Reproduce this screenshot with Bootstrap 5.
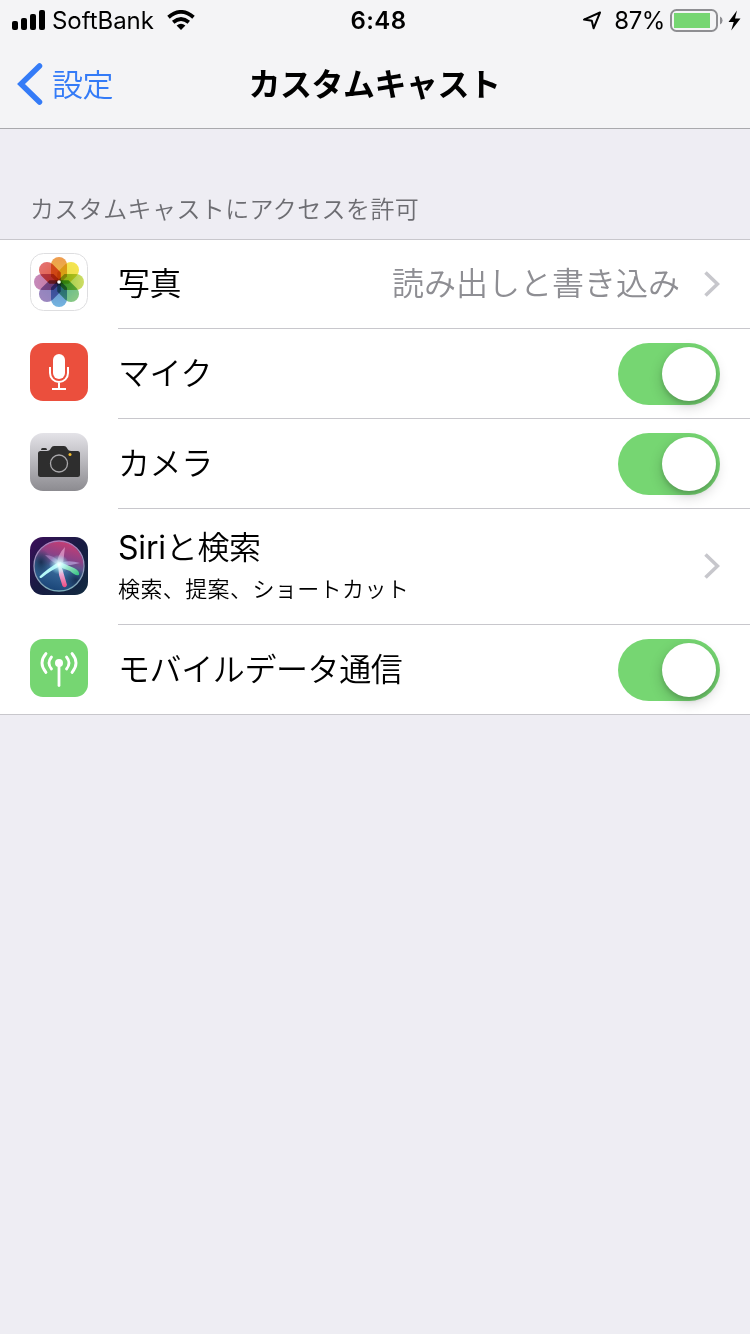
<!DOCTYPE html>
<html lang="ja">
<head>
<meta charset="utf-8">
<meta name="viewport" content="width=device-width, initial-scale=1">
<title>カスタムキャスト</title>
<link href="https://cdn.jsdelivr.net/npm/bootstrap@5.3.0/dist/css/bootstrap.min.css" rel="stylesheet">
<style>
  body { background: #eeedf3; color: #000; font-family: Inter, "Noto Sans CJK JP", sans-serif; font-weight: 350; line-height: 1; }
  svg { display: block; flex: none; }
  .top-area { background: #f4f4f6; height: 129px; border-bottom: 1px solid #a9a9ad; }
  .status-row { height: 40px; font-size: 24px; font-weight: 400; display: grid; grid-template-columns: 1fr auto 1fr; padding: 0 9px 0 12px; }
  .carrier { letter-spacing: -.05px; margin: 0 13px 0 7px; padding-top: 2px; }
  .clock { font-weight: 600; letter-spacing: .4px; padding: 2px 0 0 4px; }
  .percent { letter-spacing: -.4px; padding-top: 2px; margin: 0 4px 0 12px; }
  .title-row { height: 88px; display: grid; grid-template-columns: 1fr auto 1fr; padding: 0 17px; }
  .back-link { color: #347bf7; font-size: 31px; letter-spacing: -.5px; gap: 9px; }
  .page-title { font-size: 32px; font-weight: 700; letter-spacing: -.5px; padding: 2px 1px 0 0; }
  .section-label { height: 110px; padding: 0 30px 14px; font-size: 24px; font-weight: 350; letter-spacing: .4px; color: #6d6d72; }
  .settings { border-top: 1px solid #c8c7cc; border-bottom: 1px solid #c8c7cc; background: #fff; }
  .setting { height: 90px; padding-left: 30px; gap: 30px; }
  .setting:first-child { height: 89px; }
  .setting:last-child { height: 89px; }
  .app-icon { margin-bottom: 4px; }
  .setting:first-child .app-icon { margin-bottom: 5px; }
  .setting-tall .app-icon { margin-bottom: 2px; }
  .setting.setting-tall { height: 116px; }
  .setting-body { height: 100%; border-bottom: 1px solid #c8c7cc; padding-right: 30px; font-size: 32px; }
  .setting:last-child .setting-body { border-bottom: 0; }
  .setting-name { letter-spacing: -.4px; }
  .setting-value { color: #8e8e93; }
  .latin { font-weight: 400; letter-spacing: -.2px; }
  .siri-text { padding-bottom: 1px; }
  .setting-note { font-size: 22px; letter-spacing: .4px; margin-top: 14px; }
  .siri-arrow { margin-bottom: 2px; }
  .toggle { appearance: none; width: 102px; height: 62px; border-radius: 31px; background: #76d672; margin: 1px 0 0; padding: 4px; display: flex; justify-content: flex-end; overflow: visible; }
  .toggle::before { content: ""; width: 54px; height: 54px; border-radius: 50%; background: #fff; box-shadow: 0 5px 14px rgba(0,0,0,.2), 0 3px 4px rgba(0,0,0,.12); }
  .petals use { mix-blend-mode: multiply; }
  .petals { isolation: isolate; }
</style>
</head>
<body>
<header class="top-area">
  <div class="status-row align-items-center">
    <div class="d-flex align-items-center">
      <svg width="33" height="20" viewBox="0 0 33 20"><rect y="11" width="6" height="9" rx="2"/><rect x="9" y="8" width="6" height="12" rx="2"/><rect x="18" y="4" width="6" height="16" rx="2"/><rect x="27" width="6" height="20" rx="2"/></svg>
      <span class="carrier">SoftBank</span>
      <svg width="28" height="20" viewBox="0 0 28 20" fill="none" stroke="#000" stroke-width="3.8"><path d="M1.500 7.200Q14-3.400 26.500 7.200M6.200 12.200Q14 5.800 21.800 12.200"/><path d="M14 20l-4.400-4.400q4.400-3.800 8.800 0z" fill="#000" stroke="none"/></svg>
    </div>
    <span class="clock">6:48</span>
    <div class="d-flex align-items-center justify-content-end">
      <svg width="20" height="19" viewBox="0 0 20 19" fill="none" stroke="#000" stroke-width="2" stroke-linejoin="round"><path d="M18 1.500L2 8.600l7.800 1.100 1.800 7.600z"/></svg>
      <span class="percent">87%</span>
      <svg width="72" height="24" viewBox="0 0 72 24"><rect x="2" y="2" width="46" height="21" rx="5.500" fill="none" stroke="#8e8e92" stroke-width="2"/><rect x="5" y="5" width="36" height="15" fill="#76d672"/><path d="M51 8.500q2.600 1 2.600 4t-2.600 4z" fill="#8e8e92"/><path d="M68 2.500L59.500 14h5.200l-2.500 8.500L71.500 10.500H66z"/></svg>
    </div>
  </div>
  <nav class="title-row align-items-center" aria-label="設定">
    <a class="back-link d-flex align-items-center text-decoration-none" href="#">
      <svg width="26" height="42" viewBox="0 0 26 42" fill="none" stroke="#347bf7" stroke-width="5.500" stroke-linecap="round"><path d="M22.500 3L4 21l18.500 18"/></svg>
      <span>設定</span>
    </a>
    <h1 class="page-title m-0">カスタムキャスト</h1>
  </nav>
</header>
<main>
  <h2 class="section-label d-flex align-items-end m-0">カスタムキャストにアクセスを許可</h2>
  <div class="settings">
    <div class="setting d-flex align-items-center">
      <svg class="app-icon" width="58" height="58" viewBox="0 0 58 58">
        <rect x=".5" y=".5" width="57" height="57" rx="13" fill="#fff" stroke="#dedee0"/>
        <defs>
          <path id="petal" d="M21 12a8 8 0 0116 0v11.500l-5.500 5.500h-5l-5.500-5.500z"/>
          <linearGradient id="p0" x1="0" y1="0" x2="0" y2="1"><stop stop-color="#ee9b50"/><stop offset="1" stop-color="#e9c33b"/></linearGradient>
          <linearGradient id="p1" x1="0" y1="0" x2="0" y2="1"><stop stop-color="#f5e553"/><stop offset="1" stop-color="#e6dd43"/></linearGradient>
          <linearGradient id="p2" x1="0" y1="0" x2="0" y2="1"><stop stop-color="#cfdd64"/><stop offset="1" stop-color="#89c541"/></linearGradient>
          <linearGradient id="p3" x1="0" y1="0" x2="0" y2="1"><stop stop-color="#8ac984"/><stop offset="1" stop-color="#53b394"/></linearGradient>
          <linearGradient id="p4" x1="0" y1="0" x2="0" y2="1"><stop stop-color="#74b6e1"/><stop offset="1" stop-color="#6689c4"/></linearGradient>
          <linearGradient id="p5" x1="0" y1="0" x2="0" y2="1"><stop stop-color="#9d87bf"/><stop offset="1" stop-color="#8582bd"/></linearGradient>
          <linearGradient id="p6" x1="0" y1="0" x2="0" y2="1"><stop stop-color="#c58abb"/><stop offset="1" stop-color="#ca7298"/></linearGradient>
          <linearGradient id="p7" x1="0" y1="0" x2="0" y2="1"><stop stop-color="#e47272"/><stop offset="1" stop-color="#e05a36"/></linearGradient>
        </defs>
        <g class="petals">
          <use href="#petal" fill="url(#p0)"/>
          <use href="#petal" fill="url(#p1)" transform="rotate(45 29 29)"/>
          <use href="#petal" fill="url(#p2)" transform="rotate(90 29 29)"/>
          <use href="#petal" fill="url(#p3)" transform="rotate(135 29 29)"/>
          <use href="#petal" fill="url(#p4)" transform="rotate(180 29 29)"/>
          <use href="#petal" fill="url(#p5)" transform="rotate(225 29 29)"/>
          <use href="#petal" fill="url(#p6)" transform="rotate(270 29 29)"/>
          <use href="#petal" fill="url(#p7)" transform="rotate(315 29 29)"/>
        </g>
        <circle cx="29" cy="29" r="1.800" fill="#fff"/>
      </svg>
      <div class="setting-body d-flex align-items-center flex-grow-1">
        <span class="setting-name flex-grow-1">写真</span>
        <span class="setting-value me-4">読み出しと書き込み</span>
        <svg width="16" height="26" viewBox="0 0 16 26" fill="none" stroke="#c7c7cc" stroke-width="3.600"><path d="M1.500 1.500L13.500 13 1.500 24.500"/></svg>
      </div>
    </div>
    <div class="setting d-flex align-items-center">
      <svg class="app-icon" width="58" height="58" viewBox="0 0 58 58"><rect width="58" height="58" rx="13" fill="#eb4f3d"/><rect x="23" y="11" width="12" height="25" rx="6" fill="#fff"/><path d="M20 24v6a9 9 0 0018 0v-6M29 39v6M22 46h14" fill="none" stroke="#fff" stroke-width="2"/></svg>
      <div class="setting-body d-flex align-items-center flex-grow-1">
        <label class="setting-name flex-grow-1" for="mic">マイク</label>
        <input class="toggle" type="checkbox" role="switch" id="mic" checked>
      </div>
    </div>
    <div class="setting d-flex align-items-center">
      <svg class="app-icon" width="58" height="58" viewBox="0 0 58 58"><defs><linearGradient id="cam" x1="0" y1="0" x2="0" y2="1"><stop stop-color="#e4e3e8"/><stop offset="1" stop-color="#8c8b90"/></linearGradient></defs><rect width="58" height="58" rx="13" fill="url(#cam)"/><path d="M12.500 15h3q1.500 0 1.500 2h-6q0-2 1.500-2z" fill="#2e2e2e"/><path d="M10.500 18H17q2.500 0 3.500-2l.5-1q1-2 3-2h10q2 0 3 2l.5 1q1 2 3.500 2h6.500q2.500 0 2.500 2.500v21q0 2.500-2.500 2.500h-37Q8 44 8 41.500v-21Q8 18 10.500 18z" fill="#2e2e2e"/><circle cx="29" cy="30.500" r="8.500" fill="none" stroke="#aaa9ac" stroke-width="1.300"/><circle cx="40" cy="21.500" r="1.500" fill="#f4bd2c"/></svg>
      <div class="setting-body d-flex align-items-center flex-grow-1">
        <label class="setting-name flex-grow-1" for="camera">カメラ</label>
        <input class="toggle" type="checkbox" role="switch" id="camera" checked>
      </div>
    </div>
    <div class="setting setting-tall d-flex align-items-center">
      <svg class="app-icon" width="58" height="58" viewBox="0 0 58 58">
        <defs>
          <linearGradient id="siriBg" x1="0" y1="0" x2="1" y2="1"><stop stop-color="#3c0f5a"/><stop offset=".5" stop-color="#171b42"/><stop offset="1" stop-color="#122b40"/></linearGradient>
          <linearGradient id="orb" x1=".65" y1="0" x2=".35" y2="1"><stop stop-color="#c73d72"/><stop offset=".3" stop-color="#8d4287"/><stop offset=".58" stop-color="#38699a"/><stop offset="1" stop-color="#194477"/></linearGradient>
          <linearGradient id="rim" x1="0" y1="0" x2="0" y2="1"><stop stop-color="#b07cba"/><stop offset="1" stop-color="#7aaebb"/></linearGradient>
          <linearGradient id="tail" x1="0" y1="0" x2="0" y2="1"><stop stop-color="#fff"/><stop offset=".5" stop-color="#e9a0cc"/><stop offset="1" stop-color="#ee4a80"/></linearGradient>
          <linearGradient id="green" x1="0" y1="0" x2="1" y2="1"><stop stop-color="#eaffff"/><stop offset="1" stop-color="#2fc07c"/></linearGradient>
          <radialGradient id="glow"><stop stop-color="#fff"/><stop offset=".35" stop-color="#cff" stop-opacity=".7"/><stop offset="1" stop-color="#8ef" stop-opacity="0"/></radialGradient>
          <radialGradient id="shade"><stop stop-color="#102344" stop-opacity=".8"/><stop offset="1" stop-color="#102344" stop-opacity="0"/></radialGradient>
        </defs>
        <rect width="58" height="58" rx="13" fill="url(#siriBg)"/>
        <circle cx="29" cy="29" r="24.500" fill="url(#orb)"/>
        <circle cx="46" cy="43" r="12" fill="url(#shade)"/>
        <ellipse cx="11" cy="25" rx="10" ry="13" fill="url(#shade)"/>
        <circle cx="29" cy="29" r="25" fill="none" stroke="url(#rim)" stroke-width="1.300"/>
        <path d="M29 28Q23 26 15 18q9 0 14 7z" fill="#c59bdc" opacity=".5"/>
        <path d="M27 28Q27 18 35 10q-1 8-2 17z" fill="#f5b5de" opacity=".6"/>
        <path d="M29 27Q36 22 50 26q-10 3-21 3z" fill="#c8b5ec" opacity=".6"/>
        <path d="M9.500 39.500q8-8 19.500-14.500l4 3Q21 33 12 40.500q-2.500 1.500-2.500-1z" fill="#b5f8f8"/>
        <path d="M28 27q4 2 5.500 9l3.500 12q-1.500 4-4.500 1L29 38z" fill="url(#tail)"/>
        <path d="M30 25l14 6q6 3 5 7-4 1-9-4l-11-4z" fill="url(#green)"/>
        <circle cx="29" cy="27.500" r="10" fill="url(#glow)"/>
      </svg>
      <div class="setting-body d-flex align-items-center flex-grow-1">
        <div class="siri-text flex-grow-1"><div class="setting-name"><span class="latin">Siri</span>と検索</div><div class="setting-note">検索、提案、ショートカット</div></div>
        <svg class="siri-arrow" width="16" height="26" viewBox="0 0 16 26" fill="none" stroke="#c7c7cc" stroke-width="3.600"><path d="M1.500 1.500L13.500 13 1.500 24.500"/></svg>
      </div>
    </div>
    <div class="setting d-flex align-items-center">
      <svg class="app-icon" width="58" height="58" viewBox="0 0 58 58"><rect width="58" height="58" rx="13" fill="#76d672"/><g fill="none" stroke="#fff" stroke-width="2.800" stroke-linecap="round"><path d="M29 26v20.500"/><path d="M21.500 18q-5 6 0 12M36.500 18q5 6 0 12M16 14.500q-8 9.500 0 19M42 14.500q8 9.500 0 19"/></g><circle cx="29" cy="24" r="4" fill="#fff"/></svg>
      <div class="setting-body d-flex align-items-center flex-grow-1">
        <label class="setting-name flex-grow-1" for="mobile">モバイルデータ通信</label>
        <input class="toggle" type="checkbox" role="switch" id="mobile" checked>
      </div>
    </div>
  </div>
</main>
<script src="https://cdn.jsdelivr.net/npm/bootstrap@5.3.0/dist/js/bootstrap.bundle.min.js"></script>
</body>
</html>
